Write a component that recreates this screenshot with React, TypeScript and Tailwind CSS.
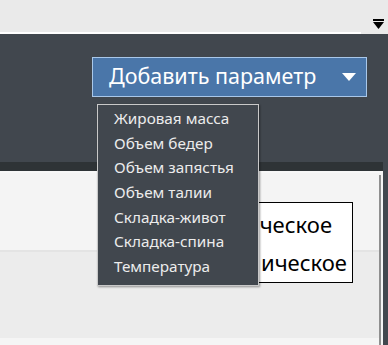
import { useState } from 'react';

const PARAMS = [
  'Жировая масса',
  'Объем бедер',
  'Объем запястья',
  'Объем талии',
  'Складка-живот',
  'Складка-спина',
  'Температура',
];

function CollapseIcon() {
  return (
    <svg width="11" height="11" viewBox="0 0 11 11" aria-hidden="true">
      <rect x="0" y="0" width="11" height="2" fill="#000" />
      <polygon points="0,3 11,3 5.5,10" fill="#000" />
    </svg>
  );
}

export default function App() {
  const [open] = useState(true);

  return (
    <div
      className="relative h-[345px] w-[388px] overflow-hidden bg-[#41474e]"
      style={{ fontFamily: '"Noto Sans", "Open Sans", sans-serif' }}
    >
      {/* top toolbar strip */}
      <div className="flex h-[34px] flex-col bg-[#eaeaea]">
        <div className="flex h-[32px] items-start justify-end pr-[4px] pt-[19px]">
          <CollapseIcon />
        </div>
        <div className="h-[2px] w-[361px] bg-white" />
      </div>

      {/* header with add button */}
      <div className="h-[128px] pl-[92px] pt-[23px]">
        <button className="flex h-[40px] w-[275px] items-center justify-between border border-[#a9c8ea] bg-[#4a76a9] pl-[16px] pr-[10px] text-[21.5px] leading-none text-white">
          <span className="-mt-[2px]">Добавить параметр</span>
          <svg width="14" height="8" viewBox="0 0 14 8" aria-hidden="true">
            <polygon points="0,0 14,0 7,8" fill="#fff" />
          </svg>
        </button>
      </div>

      {/* content panel */}
      <div className="w-[383px]">
        <div className="h-[9px] bg-[#2e3336]" />
        <div className="h-[2px] bg-[#f7f7f7]" />
        <div className="flex h-[172px] bg-[#f4f4f4]">
          <div className="flex flex-1 flex-col">
            <div className="h-[77px] bg-[#f4f4f4]" />
            <div className="h-[2px] bg-[#e4e4e4]" />
            <div className="h-[86px] bg-[#ececec]" />
            <div className="flex-1 bg-[#f5f5f5]" />
          </div>
          <div className="mt-[2px] w-[2px] bg-[#8f8f8f]" />
          <div className="w-[2px] bg-[#f4f4f4]" />
        </div>
      </div>

      {/* opened type list (left part is covered by the dropdown) */}
      <div className="absolute left-[250px] top-[202px] flex h-[81px] w-[103px] flex-col justify-center gap-[12px] border border-black bg-white text-right text-[22px] leading-[26px] text-black">
        <div className="pr-[20px]">ческое</div>
        <div className="pr-[5px]">ическое</div>
      </div>

      {/* parameter dropdown */}
      {open && (
        <div className="absolute left-[97px] top-[104px] w-[162px] border border-[#c9c9c9] bg-[#41474e] pb-[6px] pt-[1px] shadow-[1px_1px_2px_rgba(0,0,0,0.4)]">
          {PARAMS.map((p) => (
            <div
              key={p}
              className="h-[24.7px] whitespace-nowrap pl-[16px] text-[15.3px] leading-[24px] text-[#ececec]"
            >
              {p}
            </div>
          ))}
        </div>
      )}
    </div>
  );
}
